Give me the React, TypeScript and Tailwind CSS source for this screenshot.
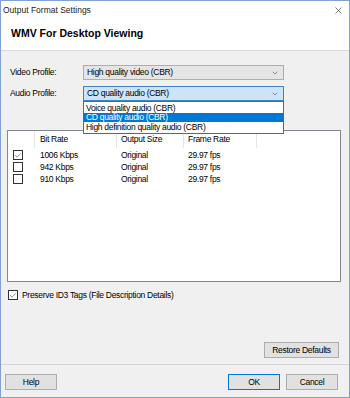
import { Check, X, ChevronDown } from 'lucide-react'

const font = "font-['Liberation_Sans',Arial,sans-serif]"

const rows = [
  { checked: true, rate: '1006 Kbps', size: 'Original', fps: '29.97 fps' },
  { checked: false, rate: '942 Kbps', size: 'Original', fps: '29.97 fps' },
  { checked: false, rate: '910 Kbps', size: 'Original', fps: '29.97 fps' },
]

const Box = ({ checked }: { checked: boolean }) => (
  <div className="w-[10px] h-[10px] border border-[#333333] bg-white flex items-center justify-center">
    {checked && <Check size={9} strokeWidth={1.6} className="text-[#333333]" />}
  </div>
)

const Btn = ({ label, primary }: { label: string; primary?: boolean }) => (
  <button
    className={`w-[52px] h-[16px] bg-[#e1e1e1] border text-[8.5px] tracking-[-0.3px] leading-none text-black ${
      primary ? 'border-[#0078d7]' : 'border-[#adadad]'
    }`}
  >
    {label}
  </button>
)

export default function App() {
  return (
    <div className={`${font} w-[350px] h-[398px] border border-[#7ea2d6] bg-[#f0f0f0] flex flex-col text-black`}>
      {/* title bar + header */}
      <div className="bg-white h-[50px] flex flex-col border-b border-[#dadada]">
        <div className="h-[18px] flex items-center justify-between pl-[2px] pr-[5px]">
          <span className="text-[8.5px] text-[#222]">Output Format Settings</span>
          <X size={11} strokeWidth={1.2} className="text-[#222]" />
        </div>
        <div className="pl-[10px] pt-[8px] text-[10.5px] font-bold leading-[12px]">WMV For Desktop Viewing</div>
      </div>

      {/* content */}
      <div className="flex-1 flex flex-col text-[8.5px] tracking-[-0.3px] leading-none">
        <div className="pl-[9px] pt-[14px] flex flex-col gap-[6px]">
          <div className="flex items-center">
            <span className="w-[73px]">Video Profile:</span>
            <div className="w-[201px] h-[15px] bg-[#e5e5e5] border border-[#adadad] flex items-center justify-between pl-[3px] pr-[4px]">
              <span>High quality video (CBR)</span>
              <ChevronDown size={8} strokeWidth={1.5} className="text-[#333]" />
            </div>
          </div>
          <div className="flex items-center">
            <span className="w-[73px]">Audio Profile:</span>
            <div className="relative w-[201px] h-[15px] bg-[#cce4f7] border border-[#3d86c6] flex items-center justify-between pl-[3px] pr-[4px]">
              <span>CD quality audio (CBR)</span>
              <ChevronDown size={8} strokeWidth={1.5} className="text-[#333]" />
              <div className="absolute left-[-1px] top-[14px] w-[201px] bg-white border border-[#3d6e9e] z-10 flex flex-col py-[1px]">
                <div className="h-[9.5px] flex items-center pl-[2px]">Voice quality audio (CBR)</div>
                <div className="h-[9.5px] flex items-center pl-[2px] bg-[#0078d7] text-white">CD quality audio (CBR)</div>
                <div className="h-[9.5px] flex items-center pl-[2px]">High definition quality audio (CBR)</div>
              </div>
            </div>
          </div>
        </div>

        {/* list panel */}
        <div className="ml-[6px] mr-[8px] mt-[29px] h-[152px] bg-white border border-[#828790]">
          <div className="flex h-[17px]">
            <div className="w-[27px] border-r border-[#e5e5e5]" />
            <div className="w-[82px] border-r border-[#e5e5e5] pl-[5px] flex items-center">Bit Rate</div>
            <div className="w-[67px] border-r border-[#e5e5e5] pl-[4px] flex items-center">Output Size</div>
            <div className="w-[73px] border-r border-[#e5e5e5] pl-[4px] flex items-center">Frame Rate</div>
          </div>
          <div className="flex flex-col pt-[1px]">
            {rows.map((r) => (
              <div key={r.rate} className="flex h-[12px] items-center">
                <div className="w-[27px] pl-[5px]">
                  <Box checked={r.checked} />
                </div>
                <div className="w-[82px] pl-[5px]">{r.rate}</div>
                <div className="w-[67px] pl-[4px]">{r.size}</div>
                <div className="w-[73px] pl-[4px]">{r.fps}</div>
              </div>
            ))}
          </div>
        </div>

        <div className="flex items-center gap-[4px] pl-[7px] mt-[8px]">
          <Box checked />
          <span>Preserve ID3 Tags (File Description Details)</span>
        </div>

        <div className="mt-auto mb-[6px] flex justify-end pr-[10px]">
          <button className="w-[75px] h-[16px] bg-[#e1e1e1] border border-[#adadad] text-[8.5px] tracking-[-0.3px] leading-none">
            Restore Defaults
          </button>
        </div>
      </div>

      {/* button bar */}
      <div className="h-[33px] border-t border-[#d5d5d5] flex items-start justify-between pt-[9px] pl-[4px] pr-[11px]">
        <Btn label="Help" />
        <div className="flex gap-[6px]">
          <Btn label="OK" primary />
          <Btn label="Cancel" />
        </div>
      </div>
    </div>
  )
}
